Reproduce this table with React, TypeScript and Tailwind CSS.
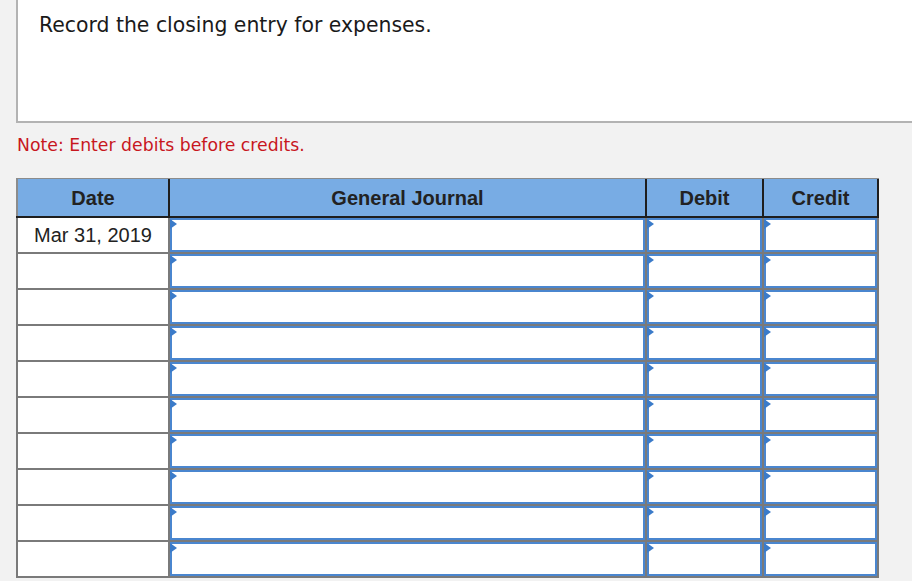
// Journal entry worksheet: prompt box, note and an empty general journal grid.

const ROWS = 10;

function Flag() {
  return (
    <span className="absolute -left-[2px] -top-[1px] h-0 w-0 border-y-[5px] border-l-[7px] border-y-transparent border-l-[#3b7bc9]" />
  );
}

function InputCell({ width, last }: { width: string; last?: boolean }) {
  return (
    <div className={`${width} shrink-0 border-l-2 border-[#7a7a7a] ${last ? "border-r-2" : ""}`}>
      <div className="relative h-full border-2 border-[#4a86cf] bg-white">
        <Flag />
      </div>
    </div>
  );
}

export default function App() {
  const rows = Array.from({ length: ROWS }, (_, i) => i);

  return (
    <div className="min-h-[581px] w-full bg-[#f2f2f2] pb-[3px]">
      <div className="ml-[16px] h-[123px] border-b-2 border-l-2 border-[#b3b3b3] bg-white pl-[21px] pt-[13px] font-['DejaVu_Sans',sans-serif] text-[20.4px] leading-[24px] text-[#1a1a1a]">
        Record the closing entry for expenses.
      </div>

      <p className="ml-[17px] mt-[12px] font-['DejaVu_Sans',sans-serif] text-[17.3px] leading-[20px] text-[#c8171e]">
        Note: Enter debits before credits.
      </p>

      <div className="ml-[16px] mt-[23px] w-[863px] font-['Liberation_Sans',Arial,sans-serif] text-[#222]">
        {/* header */}
        <div className="flex h-[40px] border-t border-b-2 border-t-[#8c8c8c] border-b-[#1e1e1e] bg-[#78ace4] text-[20px] font-bold">
          <div className="flex w-[152px] shrink-0 items-center justify-center border-l-2 border-[#8c8c8c]">Date</div>
          <div className="flex w-[477px] shrink-0 items-center justify-center border-l-2 border-[#1e1e1e]">General Journal</div>
          <div className="flex w-[117px] shrink-0 items-center justify-center border-l-2 border-[#1e1e1e]">Debit</div>
          <div className="flex w-[117px] shrink-0 items-center justify-center border-x-2 border-[#1e1e1e]">Credit</div>
        </div>

        {rows.map((i) => (
          <div key={i} className="flex h-[36px] border-b-2 border-[#7a7a7a]">
            <div className="flex w-[152px] shrink-0 items-center justify-center border-l-2 border-[#7a7a7a] bg-white text-[20px]">
              {i === 0 ? "Mar 31, 2019" : ""}
            </div>
            <InputCell width="w-[477px]" />
            <InputCell width="w-[117px]" />
            <InputCell width="w-[117px]" last />
          </div>
        ))}
      </div>
    </div>
  );
}
